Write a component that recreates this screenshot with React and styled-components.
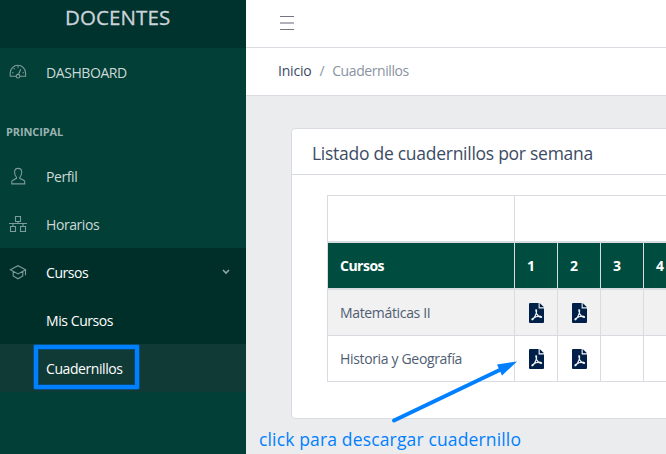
import React from "react";
import styled, { createGlobalStyle } from "styled-components";

const GlobalStyle = createGlobalStyle`
  * { box-sizing: border-box; }
  html, body { margin: 0; padding: 0; overflow: hidden; }
  body { font-family: "Open Sans", "Noto Sans", sans-serif; font-size: 14px; line-height: 21px; color: #3c4b64; }
`;

const Page = styled.div`
  position: relative;
  display: flex;
  width: 666px;
  height: 454px;
  overflow: hidden;
  background: #ebecee;
`;

const Sidebar = styled.aside`
  width: 246px;
  flex: none;
  background: #023f37;
  color: #cdd9d7;
`;

const Brand = styled.div`
  height: 48px;
  padding: 4px 0 0 65px;
  background: #00322e;
  color: #ccd3d9;
  font-size: 20.5px;
  line-height: 26px;
  letter-spacing: 0.1px;
  -webkit-text-stroke: 0.3px #ccd3d9;
`;

const NavTitle = styled.div`
  height: 56px;
  padding: 26px 6px 0;
  color: #99b2af;
  font-size: 11px;
  font-weight: 700;
  line-height: 20px;
  letter-spacing: -0.1px;
`;

const NavItem = styled.div`
  display: flex;
  align-items: center;
  height: 48px;
  padding: 0 16px 0 ${(p) => (p.$nested ? "46px" : "9px")};
  background: ${(p) => (p.$active ? "#103a36" : "transparent")};
  color: ${(p) => (p.$bright ? "#fff" : "#cdd9d7")};
`;

const NavLabel = styled.span`
  flex: 1;
  letter-spacing: -0.42px;
`;

const NavIcon = styled.svg`
  width: 18px;
  height: 18px;
  margin: 0 19px 0 0;
  fill: none;
  stroke: #7b9c98;
  stroke-width: 1.1;
`;

const Chevron = styled.svg`
  width: 8px;
  height: 6px;
  margin-top: -1px;
  fill: none;
  stroke: #8fa9a6;
  stroke-width: 1.6;
`;

const NavGroup = styled.div`
  background: #002f2a;
`;

const Main = styled.main`
  width: 420px;
  flex: none;
`;

const TopBar = styled.header`
  display: flex;
  align-items: center;
  height: 48px;
  padding-left: 34px;
  background: #fff;
  border-bottom: 1px solid #d8dbe0;
`;

const Burger = styled.div`
  width: 14px;
  height: 14px;
  display: flex;
  flex-direction: column;
  justify-content: space-between;
  margin-top: -1px;
`;

const BurgerLine = styled.i`
  height: ${(p) => (p.$soft ? "2px" : "1px")};
  background: ${(p) => (p.$soft ? "#b3b1b8" : "#77747f")};
`;

const Breadcrumb = styled.nav`
  display: flex;
  gap: 8px;
  height: 48px;
  padding: 12px 0 0 32px;
  background: #fff;
  border-bottom: 1px solid #d8dbe0;
`;

const Crumb = styled.span`
  color: ${(p) => (p.$link ? "#3c4b64" : "#8a93a2")};
  letter-spacing: ${(p) => (p.$link ? "-0.2px" : "-0.42px")};
`;

const Card = styled.section`
  width: 480px;
  height: 291px;
  margin: 32px 0 0 45px;
  background: #fff;
  border: 1px solid #d8dbe0;
  border-radius: 4px;
`;

const CardHeader = styled.h1`
  height: 46px;
  margin: 0;
  padding: 12px 20px 0;
  border-bottom: 1px solid #d8dbe0;
  font-size: 17.5px;
  font-weight: 400;
  line-height: 24px;
  letter-spacing: -0.27px;
`;

const Table = styled.table`
  width: 402px;
  margin: 20px 0 0 35px;
  table-layout: fixed;
  border-spacing: 0;
  border-top: 1px solid #d8dbe0;
`;

const Col = styled.col`
  width: ${(p) => p.$size};
`;

const Cell = styled.td`
  height: ${(p) => (p.$thick ? "47px" : "46px")};
  padding: ${(p) => (p.$icon ? "0 0 0 14px" : p.$head ? "0 0 1px 12px" : "0 0 0 12px")};
  border-left: 1px solid #d8dbe0;
  border-bottom: ${(p) => (p.$thick ? "2px" : "1px")} solid #d8dbe0;
  background: ${(p) => (p.$head ? "#004d40" : p.$striped ? "#f1f1f1" : "#fff")};
  color: ${(p) => (p.$head ? "#fff" : "#4f5d73")};
  font-weight: ${(p) => (p.$head ? 700 : 400)};
  letter-spacing: ${(p) => (p.$head ? "-0.5px" : "-0.34px")};
  text-align: left;
  white-space: nowrap;
`;

const PdfSvg = styled.svg`
  display: block;
  width: 15px;
  height: 20px;
  margin-top: 1px;
  fill: #00204a;
`;

const Highlight = styled.div`
  position: absolute;
  left: 34px;
  top: 345px;
  width: 105px;
  height: 44px;
  border: 4px solid #0080ff;
  border-radius: 1px;
  box-shadow: 0 0 0 1px rgba(0, 100, 190, 0.5), inset 0 0 0 1px rgba(0, 90, 170, 0.5);
`;

const Arrow = styled.svg`
  position: absolute;
  left: 385px;
  top: 355px;
  width: 140px;
  height: 72px;
`;

const Note = styled.div`
  position: absolute;
  left: 259px;
  top: 427px;
  color: #0080ff;
  font-size: 17.5px;
  font-weight: 400;
  line-height: 24px;
  white-space: nowrap;
  letter-spacing: 0.15px;
`;

const PdfIcon = () => (
  <PdfSvg viewBox="0 0 15 20">
    <path d="M1 0h8.6v5.4H15V19a1 1 0 0 1-1 1H1a1 1 0 0 1-1-1V1a1 1 0 0 1 1-1z" />
    <path d="M10.7 0L15 4.3h-4.3z" />
    <path
      d="M7 6.3c-.7 1.5.2 3.6 1 5.1.9 1.5 2.3 2.7 3.9 3.1.9.1 1-1.2-.2-1.3-2.9-.2-6 .9-8.4 2.5-.9.9-.2 1.5.5.8C5.4 14.7 8.4 9.5 7.5 6.5"
      fill="none"
      stroke="#f4f5f7"
      strokeWidth="1.15"
    />
  </PdfSvg>
);

const SpeedIcon = () => (
  <NavIcon viewBox="0 0 18 18">
    <path d="M7 13.2H1.2V10a7.7 7.7 0 0 1 15.4 0v3.2H11" />
    <circle cx="9" cy="13.2" r="1.8" />
    <path d="M9.5 11.3l2.3-5M9 3v1.8M4.6 5.2l1 1M3 9.7h1.5M13.6 9.7h1.5" />
  </NavIcon>
);

const UserIcon = () => (
  <NavIcon viewBox="0 0 18 18">
    <path d="M7.5 10.3C6.3 9.2 5.6 7.4 5.6 5.2c0-2.4 1.3-3.8 3.5-3.8s3.6 1.4 3.6 3.8c0 2.2-.7 4-1.9 5.1v1l4.3 2.2c.5.3.6.7.6 1.2v2.2H2.8v-2.2c0-.5.2-.9.7-1.2l4-2.2z" />
  </NavIcon>
);

const SitemapIcon = () => (
  <NavIcon viewBox="0 0 18 18">
    <path d="M6.5 1.5h5v5h-5zM1.5 11.5h5v5h-5zM11.5 11.5h5v5h-5zM9 6.5v2M4 11.5v-3M14 11.5v-3M0 8.5h18" />
  </NavIcon>
);

const SchoolIcon = () => (
  <NavIcon viewBox="0 0 18 18">
    <path d="M1.4 6.8L9 2.7l7.6 4.1L9 10.9zM4.2 8.7v4.2L9 15.8l4.8-2.9V8.7M16.5 6.8v5.5" />
  </NavIcon>
);

const weeks = ["1", "2", "3", "4"];
const courses = [
  { name: "Matemáticas II", available: 2, striped: true },
  { name: "Historia y Geografía", available: 2, striped: false },
];

export default function App() {
  return (
    <Page>
      <GlobalStyle />
      <Sidebar>
        <Brand>DOCENTES</Brand>
        <NavItem><SpeedIcon /><NavLabel>DASHBOARD</NavLabel></NavItem>
        <NavTitle>PRINCIPAL</NavTitle>
        <NavItem><UserIcon /><NavLabel>Perfil</NavLabel></NavItem>
        <NavItem><SitemapIcon /><NavLabel>Horarios</NavLabel></NavItem>
        <NavGroup>
          <NavItem $bright>
            <SchoolIcon />
            <NavLabel>Cursos</NavLabel>
            <Chevron viewBox="0 0 8 6"><path d="M1 1l3 3 3-3" /></Chevron>
          </NavItem>
          <NavItem $nested $bright><NavLabel>Mis Cursos</NavLabel></NavItem>
          <NavItem $nested $bright $active><NavLabel>Cuadernillos</NavLabel></NavItem>
        </NavGroup>
      </Sidebar>
      <Main>
        <TopBar>
          <Burger><BurgerLine /><BurgerLine $soft /><BurgerLine /></Burger>
        </TopBar>
        <Breadcrumb>
          <Crumb $link>Inicio</Crumb>
          <Crumb>/</Crumb>
          <Crumb>Cuadernillos</Crumb>
        </Breadcrumb>
        <Card>
          <CardHeader>Listado de cuadernillos por semana</CardHeader>
          <Table>
            <colgroup>
              <Col $size="187px" />
              <Col $size="43px" />
              <Col $size="43px" />
              <Col $size="43px" />
              <Col $size="86px" />
            </colgroup>
            <thead>
              <tr><Cell as="th" $thick /><Cell as="th" $thick colSpan={weeks.length} /></tr>
              <tr>
                <Cell as="th" $thick $head>Cursos</Cell>
                {weeks.map((w) => <Cell as="th" key={w} $thick $head>{w}</Cell>)}
              </tr>
            </thead>
            <tbody>
              {courses.map((course) => (
                <tr key={course.name}>
                  <Cell $striped={course.striped}>{course.name}</Cell>
                  {weeks.map((w, i) => (
                    <Cell key={w} $icon $striped={course.striped}>
                      {i < course.available && <PdfIcon />}
                    </Cell>
                  ))}
                </tr>
              ))}
            </tbody>
          </Table>
        </Card>
      </Main>
      <Highlight />
      <Arrow viewBox="385 355 140 72">
        <path d="M394 420.5L506 367" stroke="#0080ff" strokeWidth="4" strokeLinecap="round" />
        <path d="M517 361.5L497 364.5L502 375.5z" fill="#0080ff" />
      </Arrow>
      <Note>click para descargar cuadernillo</Note>
    </Page>
  );
}
